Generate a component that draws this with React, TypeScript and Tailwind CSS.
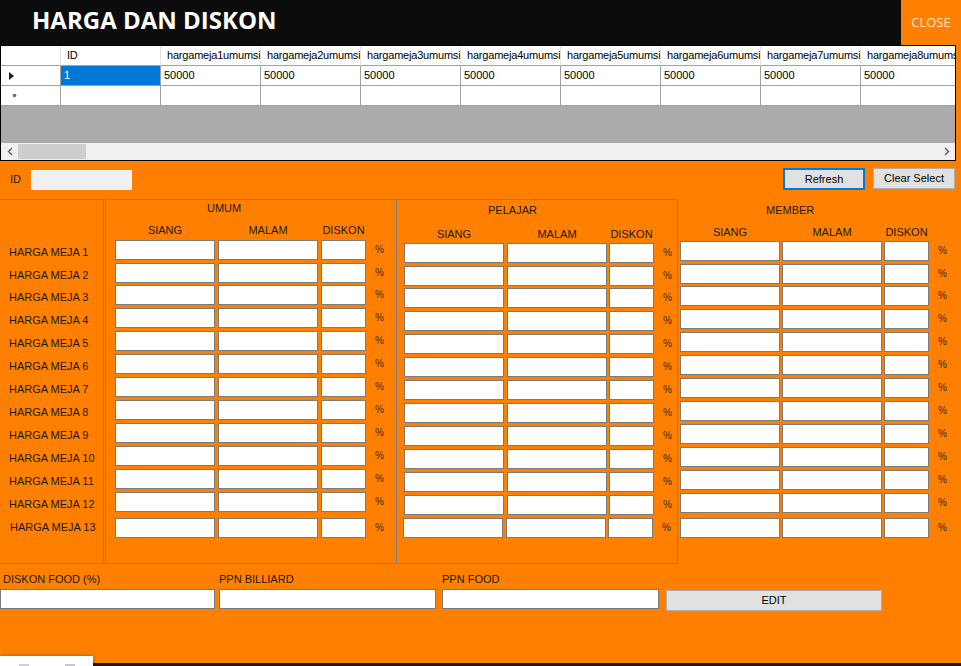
import React from 'react';

const FONT = "font-['Liberation_Sans',Arial,sans-serif]";

const cols = ['ID', ...Array.from({ length: 8 }, (_, i) => `hargameja${i + 1}umumsiang`)];

const gapCls: Record<number, string> = {
  0: '',
  2: 'mt-[2px]',
  3: 'mt-[3px]',
  5: 'mt-[5px]',
  6: 'mt-[6px]',
};

const umumGaps = [0, 3, 2, 3, 3, 3, 3, 3, 3, 3, 3, 3, 6];
const pelajarGaps = [0, 3, 2, 3, 3, 3, 3, 3, 3, 3, 3, 3, 3];
const memberGaps = [0, 3, 2, 3, 3, 3, 3, 3, 3, 3, 3, 3, 5];
const labelGaps = [0, 3, 2, 3, 3, 3, 3, 3, 3, 3, 3, 3, 3];

function Box({ w, className = '' }: { w: string; className?: string }) {
  return <div className={`${w} h-[20px] shrink-0 bg-white border border-[#7a7a7a] ${className}`} />;
}

function Chevron({ dir }: { dir: 'left' | 'right' }) {
  return (
    <svg width="6" height="9" viewBox="0 0 6 9">
      {dir === 'left' ? (
        <polyline points="5,1 1.5,4.5 5,8" fill="none" stroke="#606060" strokeWidth="1.4" />
      ) : (
        <polyline points="1,1 4.5,4.5 1,8" fill="none" stroke="#606060" strokeWidth="1.4" />
      )}
    </svg>
  );
}

function DataGrid() {
  return (
    <div className="w-[956px] h-[116px] border border-black bg-[#ababab] flex flex-col overflow-hidden">
      {/* header row */}
      <div className="flex w-max h-[20px] shrink-0">
        <div className="w-[60px] h-[20px] bg-white border-r border-r-[#e3e3e3] border-b border-b-[#a0a0a0]" />
        {cols.map((c) => (
          <div
            key={c}
            className="w-[100px] h-[20px] bg-white border-r border-r-[#e3e3e3] border-b border-b-[#a0a0a0] pl-[6px] flex items-center overflow-hidden whitespace-nowrap text-[11px] text-black tracking-[-0.2px]"
          >
            {c}
          </div>
        ))}
      </div>
      {/* row 1 */}
      <div className="flex w-max h-[20px] shrink-0">
        <div className="w-[60px] h-[20px] bg-white border-r border-b border-[#a0a0a0] flex items-center pl-[8px]">
          <svg width="5" height="8" viewBox="0 0 5 8">
            <polygon points="0,0 5,4 0,8" fill="#202020" />
          </svg>
        </div>
        {cols.map((c, i) => (
          <div
            key={c}
            className={`w-[100px] h-[20px] border-r border-b border-[#a0a0a0] pl-[3px] flex items-center text-[11px] ${
              i === 0 ? 'bg-[#0078d7] text-white' : 'bg-white text-black'
            }`}
          >
            {i === 0 ? '1' : '50000'}
          </div>
        ))}
      </div>
      {/* row 2 */}
      <div className="flex w-max h-[20px] shrink-0">
        <div className="w-[60px] h-[20px] bg-white border-r border-b border-[#a0a0a0] flex items-center pl-[11px]">
          <svg width="5" height="5" viewBox="0 0 5 5">
            <circle cx="2.5" cy="2.5" r="1.8" fill="#6a6a6a" />
          </svg>
        </div>
        {cols.map((c) => (
          <div key={c} className="w-[100px] h-[20px] bg-white border-r border-b border-[#a0a0a0]" />
        ))}
      </div>
      <div className="flex-1" />
      {/* scrollbar */}
      <div className="h-[17px] shrink-0 bg-[#f0f0f0] flex items-center">
        <div className="w-[17px] h-[17px] flex items-center justify-center">
          <Chevron dir="left" />
        </div>
        <div className="w-[68px] h-[15px] bg-[#cdcdcd]" />
        <div className="flex-1" />
        <div className="w-[17px] h-[17px] flex items-center justify-center">
          <Chevron dir="right" />
        </div>
      </div>
    </div>
  );
}

type GroupProps = {
  title: string;
  outer: string;
  titleCls: string;
  headCls: string;
  rowsCls: string;
  padCls: string;
  g1: string;
  g2: string;
  gaps: number[];
  shiftLast?: boolean;
};

function PriceGroup({ title, outer, titleCls, headCls, rowsCls, padCls, g1, g2, gaps, shiftLast }: GroupProps) {
  return (
    <div className={`${outer} flex flex-col`}>
      <div className={`h-[16px] flex items-center text-[11px] text-[#1a1a1a] ${titleCls}`}>{title}</div>
      <div className={`h-[16px] flex items-center text-[11px] text-[#1a1a1a] ${padCls} ${headCls}`}>
        <div className="w-[100px] text-center">SIANG</div>
        <div className={`w-[100px] text-center ${g1}`}>MALAM</div>
        <div className={`w-[45px] text-center ${g2}`}>DISKON</div>
      </div>
      <div className={`flex flex-col ${rowsCls}`}>
        {gaps.map((g, i) => (
          <div
            key={i}
            className={`flex items-center ${padCls} ${gapCls[g]} ${shiftLast && i === gaps.length - 1 ? '-translate-x-px' : ''}`}
          >
            <Box w="w-[100px]" />
            <Box w="w-[100px]" className={g1} />
            <Box w="w-[45px]" className={g2} />
            <span className="ml-[9px] text-[10px] text-[#3a2a10] leading-none">%</span>
          </div>
        ))}
      </div>
    </div>
  );
}

export default function App() {
  return (
    <div className={`relative w-[961px] h-[666px] bg-[#ff8000] overflow-hidden flex flex-col ${FONT}`}>
      {/* title bar */}
      <div className="h-[45px] shrink-0 bg-[#0c0c0c] flex items-start">
        <h1 className="ml-[32px] mt-[3px] text-[24px] leading-[34px] font-bold text-white font-['Open_Sans',sans-serif]">
          HARGA DAN DISKON
        </h1>
        <div className="flex-1" />
        <button className="w-[60px] h-[45px] bg-[#ff8000] text-[#ffe4cc] text-[13px] font-['Open_Sans',sans-serif] flex items-center justify-center">
          CLOSE
        </button>
      </div>

      <DataGrid />

      {/* ID row */}
      <div className="mt-[7px] h-[22px] shrink-0 flex items-start">
        <div className="w-[31px] pl-[10px] h-[22px] flex items-center text-[11px] text-[#1a1a1a]">ID</div>
        <div className="mt-[2px] w-[101px] h-[20px] bg-[#f0f0f0] border border-[#fafafa]" />
        <div className="flex-1" />
        <button className="w-[82px] h-[22px] bg-[#e1e1e1] border-2 border-[#0078d7] text-[11px] text-black flex items-center justify-center">
          Refresh
        </button>
        <button className="ml-[8px] mr-[6px] w-[82px] h-[21px] bg-[#e1e1e1] border border-[#adadad] text-[11px] text-black flex items-center justify-center">
          Clear Select
        </button>
      </div>

      {/* groups */}
      <div className="mt-[9px] h-[365px] shrink-0 flex">
        <div className="w-[104px] h-full border-t border-r border-b border-[#808080] pt-[42px] flex flex-col">
          {labelGaps.map((g, i) => (
            <div
              key={i}
              className={`h-[20px] flex items-center text-[11px] text-[#1a1a1a] whitespace-nowrap ${gapCls[g]} ${
                i === 12 ? 'pl-[10px]' : 'pl-[9px]'
              }`}
            >
              HARGA MEJA {i + 1}
            </div>
          ))}
        </div>
        <PriceGroup
          title="UMUM"
          outer="ml-[1px] w-[292px] h-full border border-[#808080]"
          titleCls="pl-[101px]"
          headCls="mt-[6px]"
          rowsCls="mt-[2px]"
          padCls="pl-[9px]"
          g1="ml-[3px]"
          g2="ml-[3px]"
          gaps={umumGaps}
        />
        <PriceGroup
          title="PELAJAR"
          outer="w-[281px] h-full border-t border-r border-b border-[#808080]"
          titleCls="mt-[2px] pl-[91px]"
          headCls="mt-[8px]"
          rowsCls="mt-[1px]"
          padCls="pl-[7px]"
          g1="ml-[3px]"
          g2="ml-[2px]"
          gaps={pelajarGaps}
          shiftLast
        />
        <PriceGroup
          title="MEMBER"
          outer="flex-1 h-full border-t border-transparent"
          titleCls="mt-[2px] pl-[88px]"
          headCls="mt-[6px]"
          rowsCls="mt-[1px]"
          padCls="pl-[2px]"
          g1="ml-[2px]"
          g2="ml-[2px]"
          gaps={memberGaps}
        />
      </div>

      {/* bottom fields */}
      <div className="mt-[8px] shrink-0 flex items-start">
        <div className="w-[215px] flex flex-col">
          <div className="h-[14px] pl-[3px] flex items-center text-[11px] text-[#1a1a1a] whitespace-nowrap">DISKON FOOD (%)</div>
          <Box w="w-[215px]" className="mt-[3px]" />
        </div>
        <div className="ml-[4px] w-[217px] flex flex-col">
          <div className="h-[14px] flex items-center text-[11px] text-[#1a1a1a] whitespace-nowrap">PPN BILLIARD</div>
          <Box w="w-[217px]" className="mt-[3px]" />
        </div>
        <div className="ml-[6px] w-[217px] flex flex-col">
          <div className="h-[14px] flex items-center text-[11px] text-[#1a1a1a] whitespace-nowrap">PPN FOOD</div>
          <Box w="w-[217px]" className="mt-[3px]" />
        </div>
        <button className="ml-[7px] mt-[18px] w-[216px] h-[21px] bg-[#e1e1e1] border border-[#adadad] text-[11px] text-black flex items-center justify-center">
          EDIT
        </button>
      </div>

      <div className="flex-1" />
      <div className="h-[3px] shrink-0 bg-[#1a1a1a]" />

      {/* overlapping taskbar thumbnail */}
      <div className="absolute left-0 top-[656px] w-[93px] h-[10px] bg-white shadow-[0_0_4px_rgba(0,0,0,0.35)] flex items-end">
        <div className="ml-[19px] w-[10px] h-[2px] bg-[#d0d0d0]" />
        <div className="ml-[36px] w-[10px] h-[2px] bg-[#c8c8c8]" />
      </div>
    </div>
  );
}
